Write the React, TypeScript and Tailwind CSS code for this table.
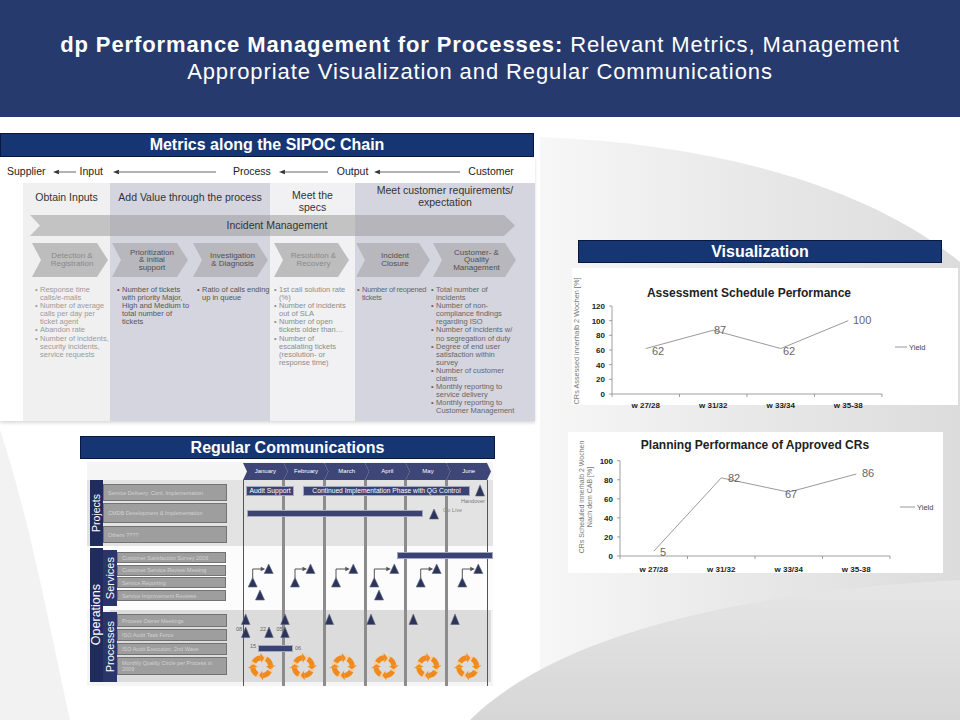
import React from "react";

function LArrow({ w, className }: { w: number; className?: string }) {
  return (
    <svg width={w} height={6} viewBox={`0 0 ${w} 6`} className={className}>
      <polygon points="0,3 6,0.8 6,5.2" fill="#333" />
      <line x1={5} y1={3} x2={w} y2={3} stroke="#666" strokeWidth={1} />
    </svg>
  );
}

function TitleBar({ children, className }: { children: React.ReactNode; className?: string }) {
  return (
    <div
      className={
        "flex items-center justify-center bg-[#163573] border border-[#08183f] text-white font-bold text-[16px] leading-none " +
        (className ?? "")
      }
    >
      {children}
    </div>
  );
}

function Lines({ lines }: { lines: string[] }) {
  return (
    <>
      {lines.map((l, i) => (
        <React.Fragment key={i}>
          {l}
          {i < lines.length - 1 && <br />}
        </React.Fragment>
      ))}
    </>
  );
}

function Bullets({ items, className }: { items: string[][]; className?: string }) {
  return (
    <div className={"text-[7.5px] leading-[8.1px] whitespace-nowrap pt-[8px] " + (className ?? "")}>
      {items.map((lines, i) => (
        <div key={i} className="flex">
          <span className="w-[5px] shrink-0">•</span>
          <span>
            <Lines lines={lines} />
          </span>
        </div>
      ))}
    </div>
  );
}

const chevClip =
  "[clip-path:polygon(0_0,calc(100%_-_11px)_0,100%_50%,calc(100%_-_11px)_100%,0_100%,9px_50%)]";

function Sipoc() {
  return (
    <div className="w-[535px] h-[264px] bg-white shadow-[0_2px_3px_rgba(0,0,0,0.15)]">
      <div className="h-[26px] flex items-center pt-[4px] pl-[7px] text-[10.5px] text-[#222]">
        <span>Supplier</span>
        <LArrow w={23} className="ml-[7px] mr-[4px]" />
        <span>Input</span>
        <LArrow w={103} className="ml-[10px] mr-[17px]" />
        <span>Process</span>
        <LArrow w={49} className="ml-[8px] mr-[9px]" />
        <span>Output</span>
        <LArrow w={86} className="ml-[6px] mr-[8px]" />
        <span>Customer</span>
      </div>
      <div className="ml-[23px] w-[512px] h-[238px] grid grid-cols-[87px_81px_79px_85px_75px_105px] grid-rows-[31px_26px_38px_143px] text-[#333]">
        <div className="col-start-1 row-start-1 row-span-4 bg-[#f0f0f1]" />
        <div className="col-start-2 col-span-2 row-start-1 row-span-4 bg-[#d5d5e0]" />
        <div className="col-start-4 row-start-1 row-span-4 bg-[#f1f1f3]" />
        <div className="col-start-5 col-span-2 row-start-1 row-span-4 bg-[#d5d5e0]" />

        <div className="col-start-1 row-start-1 text-center pt-[8px] text-[10.5px] leading-[12px]">Obtain Inputs</div>
        <div className="col-start-2 col-span-2 row-start-1 text-center pt-[8px] text-[10.5px] leading-[12px]">
          Add Value through the process
        </div>
        <div className="col-start-4 row-start-1 text-center pt-[6px] text-[10.5px] leading-[12px]">
          Meet the
          <br />
          specs
        </div>
        <div className="col-start-5 col-span-2 row-start-1 text-center pt-[1px] text-[10.5px] leading-[12px]">
          Meet customer requirements/
          <br />
          expectation
        </div>

        <div
          className={
            "col-start-1 col-span-6 row-start-2 ml-[7px] mr-[20px] mt-[1px] h-[21px] pl-[9px] flex items-center justify-center bg-[rgba(149,149,149,0.5)] text-[10.5px] text-[#333] [clip-path:polygon(0_0,calc(100%_-_11px)_0,100%_50%,calc(100%_-_11px)_100%,0_100%,10px_50%)]"
          }
        >
          Incident Management
        </div>

        <div className={"col-start-1 row-start-3 ml-[9px] mt-[3px] w-[76px] h-[34px] pl-[4px] flex items-center justify-center text-center text-[8px] leading-[8px] bg-[#bdbdbd] text-[#8a8a8a] " + chevClip}>
          <span>Detection &amp;<br />Registration</span>
        </div>
        <div className={"col-start-2 row-start-3 ml-[2px] mt-[3px] w-[76px] h-[34px] pl-[4px] flex items-center justify-center text-center text-[8px] leading-[7.5px] bg-[#b7b7bd] text-[#505050] " + chevClip}>
          <span>Prioritization<br />&amp; initial<br />support</span>
        </div>
        <div className={"col-start-3 row-start-3 ml-[2px] mt-[3px] w-[75px] h-[34px] pl-[4px] flex items-center justify-center text-center text-[8px] leading-[8px] bg-[#b7b7bd] text-[#505050] " + chevClip}>
          <span>Investigation<br />&amp; Diagnosis</span>
        </div>
        <div className={"col-start-4 row-start-3 ml-[4px] mt-[3px] w-[75px] h-[34px] pl-[4px] flex items-center justify-center text-center text-[8px] leading-[8px] bg-[#bdbdbd] text-[#8a8a8a] " + chevClip}>
          <span>Resolution &amp;<br />Recovery</span>
        </div>
        <div className={"col-start-5 row-start-3 ml-[1px] mt-[3px] w-[74px] h-[34px] pl-[4px] flex items-center justify-center text-center text-[8px] leading-[8px] bg-[#b7b7bd] text-[#505050] " + chevClip}>
          <span>Incident<br />Closure</span>
        </div>
        <div className={"col-start-6 row-start-3 ml-[3px] mt-[3px] w-[83px] h-[34px] pl-[4px] flex items-center justify-center text-center text-[8px] leading-[7.5px] bg-[#b7b7bd] text-[#505050] " + chevClip}>
          <span>Customer- &amp;<br />Quality<br />Management</span>
        </div>

        <Bullets
          className="col-start-1 row-start-4 pl-[12px] text-[#9b9b9b]"
          items={[
            ["Response time", "calls/e-mails"],
            ["Number of average", "calls per day per", "ticket agent"],
            ["Abandon rate"],
            ["Number of incidents,", "security incidents,", "service requests"],
          ]}
        />
        <Bullets
          className="col-start-2 row-start-4 pl-[7px] text-[#555]"
          items={[["Number of tickets", "with priority Major,", "High and Medium to", "total number of", "tickets"]]}
        />
        <Bullets className="col-start-3 row-start-4 pl-[6px] text-[#555]" items={[["Ratio of calls ending", "up in queue"]]} />
        <Bullets
          className="col-start-4 row-start-4 pl-[4px] text-[#8c8c8c]"
          items={[
            ["1st call solution rate", "(%)"],
            ["Number of incidents", "out of SLA"],
            ["Number of open", "tickets older than…"],
            ["Number of", "escalating tickets", "(resolution- or", "response time)"],
          ]}
        />
        <Bullets className="col-start-5 row-start-4 pl-[2px] text-[#666] tracking-[-0.25px]" items={[["Number of reopened", "tickets"]]} />
        <Bullets
          className="col-start-6 row-start-4 pl-[1px] text-[#666]"
          items={[
            ["Total number of", "incidents"],
            ["Number of non-", "compliance findings", "regarding ISO"],
            ["Number of incidents w/", "no segregation of duty"],
            ["Degree of end user", "satisfaction within", "survey"],
            ["Number of customer", "claims"],
            ["Monthly reporting to", "service delivery"],
            ["Monthly reporting to", "Customer Management"],
          ]}
        />
      </div>
    </div>
  );
}

function Box({ className, children }: { className?: string; children: React.ReactNode }) {
  return (
    <div
      className={
        "bg-[#9e9e9e] border border-[#737373] text-[#d2d2d2] text-[5.5px] leading-[6px] pl-[4px] flex items-center whitespace-nowrap overflow-hidden " +
        (className ?? "")
      }
    >
      <span>{children}</span>
    </div>
  );
}

function Tri({ cx, top, w = 9, h = 10 }: { cx: number; top: number; w?: number; h?: number }) {
  return (
    <polygon
      points={`${cx - w / 2},${top + h} ${cx + w / 2},${top + h} ${cx},${top}`}
      fill="#2c3559"
      stroke="#5d6585"
      strokeWidth={0.6}
    />
  );
}

function Cycle({ cx, cy }: { cx: number; cy: number }) {
  const r = 9;
  const P = (deg: number, rad: number) => {
    const a = (deg * Math.PI) / 180;
    return `${(cx + rad * Math.cos(a)).toFixed(2)},${(cy + rad * Math.sin(a)).toFixed(2)}`;
  };
  return (
    <g>
      <circle cx={cx} cy={cy} r={r} stroke="#f3cda3" strokeWidth={5} fill="none" />
      {[0, 1, 2, 3].map((k) => {
        const b = k * 90 - 60;
        const a0 = b;
        const a1 = b + 54;
        const at = b + 76;
        return (
          <g key={k}>
            <path d={`M${P(a0, r)} A${r} ${r} 0 0 1 ${P(a1, r)}`} stroke="#f08a1d" strokeWidth={5} fill="none" />
            <polygon points={`${P(a1, r + 5)} ${P(at, r)} ${P(a1, r - 5)}`} fill="#f08a1d" />
          </g>
        );
      })}
    </g>
  );
}

const monthCols = ["col-start-2", "col-start-3", "col-start-4", "col-start-5", "col-start-6", "col-start-7"];
const months = ["January", "February", "March", "April", "May", "June"];

function Gantt({ className }: { className?: string }) {
  const lows = [165.7, 208, 249, 287.3, 333.7, 375.3];
  const highs = [181.7, 223.5, 266.3, 307.3, 349.7, 391.3];
  const cyc = [174.7, 216.3, 256.3, 298, 340.7, 380.7];
  return (
    <div
      className={
        "relative w-[406px] h-[224px] bg-[#f5f5f5] grid grid-cols-[156px_repeat(6,1fr)_6px] grid-rows-[18px_66px_64px_72px_4px] " +
        (className ?? "")
      }
    >
      <div className="row-start-2 col-start-1 col-span-8 bg-[#e3e3e3]" />
      <div className="row-start-3 col-start-1 col-span-8 bg-[#fcfcfc]" />
      <div className="row-start-4 col-start-1 col-span-8 ml-[23px] mr-[2px] bg-[#dcdcdc]" />

      {months.map((m, i) => (
        <div
          key={m}
          className={
            monthCols[i] +
            " row-start-1 mt-[1px] h-[17px] w-[calc(100%_+_4px)] bg-[#3d4676] flex items-center justify-center text-white text-[6px] [clip-path:polygon(0_0,calc(100%_-_4px)_0,100%_50%,calc(100%_-_4px)_100%,0_100%,4px_50%)]"
          }
        >
          {m}
        </div>
      ))}

      <div className="col-start-2 row-start-2 row-span-4 border-l border-[#555]" />
      <div className="col-start-3 row-start-2 row-span-4 -ml-[1.5px] border-l-[3px] border-[#8c8c8c]" />
      <div className="col-start-4 row-start-2 row-span-4 -ml-[1.5px] border-l-[3px] border-[#8c8c8c]" />
      <div className="col-start-5 row-start-2 row-span-4 -ml-[1.5px] border-l-[3px] border-[#8c8c8c]" />
      <div className="col-start-6 row-start-2 row-span-4 -ml-[1.5px] border-l-[3px] border-[#8c8c8c]" />
      <div className="col-start-7 row-start-2 row-span-4 -ml-[1.5px] border-l-[3px] border-[#8c8c8c]" />
      <div className="col-start-8 row-start-2 row-span-4 border-l border-[#555]" />

      <div className="row-start-2 col-start-1 flex pl-[3px]">
        <div className="w-[13px] bg-[#202c5e] flex items-center justify-center">
          <span className="[writing-mode:vertical-rl] rotate-180 text-white text-[10.5px] leading-none">Projects</span>
        </div>
        <div className="w-[124px] flex flex-col pt-[4px]">
          <Box className="h-[17px]">Service Delivery: Cont. Implementation</Box>
          <Box className="h-[20px] mt-[2px]">CMDB Development &amp; Implementation</Box>
          <Box className="h-[17px] mt-[3px]">Others ????</Box>
        </div>
      </div>

      <div className="row-start-3 row-span-2 col-start-1 flex pl-[3px] pt-[2px]">
        <div className="w-[13px] bg-[#202c5e] flex items-center justify-center">
          <span className="[writing-mode:vertical-rl] rotate-180 text-white text-[12.5px] leading-none">Operations</span>
        </div>
        <div className="flex flex-col">
          <div className="h-[62px] flex">
            <div className="mt-[2px] w-[14px] h-[56px] bg-[#2a3668] flex items-center justify-center">
              <span className="[writing-mode:vertical-rl] rotate-180 text-white text-[11px] leading-none">Services</span>
            </div>
            <div className="w-[109px] flex flex-col pt-[4px] gap-[1.7px]">
              <Box className="h-[11px]">Customer Satisfaction Survey 2009</Box>
              <Box className="h-[11px]">Customer Service Review Meeting</Box>
              <Box className="h-[11px]">Service Reporting</Box>
              <Box className="h-[11px]">Service Improvement Reviews</Box>
            </div>
          </div>
          <div className="h-[72px] flex">
            <div className="mt-[2px] w-[14px] h-[70px] bg-[#2a3668] flex items-center justify-center">
              <span className="[writing-mode:vertical-rl] rotate-180 text-white text-[11px] leading-none">Processes</span>
            </div>
            <div className="w-[110px] flex flex-col pt-[4px] gap-[2px]">
              <Box className="h-[13px]">Process Owner Meetings</Box>
              <Box className="h-[12px]">ISO Audit Task Force</Box>
              <Box className="h-[12px]">ISO Audit Execution, 2nd Wave</Box>
              <Box className="h-[18px]">
                Monthly Quality Circle per Process in
                <br />
                2009
              </Box>
            </div>
          </div>
        </div>
      </div>

      <svg className="absolute left-0 top-0 pointer-events-none" width={406} height={224} viewBox="0 0 406 224">
        <Tri cx={393} top={23} w={9} h={11} />
        <Tri cx={347} top={47} w={9} h={10} />
        {lows.map((L, i) => (
          <g key={i}>
            <path d={`M${L},116 V107 H${highs[i] - 7}`} stroke="#555" strokeWidth={1} fill="none" />
            <polygon points={`${highs[i] - 8},104.8 ${highs[i] - 3.5},107 ${highs[i] - 8},109.2`} fill="#555" />
            <Tri cx={L} top={115.5} w={9} h={9.5} />
            <Tri cx={highs[i]} top={102} w={9} h={9.5} />
          </g>
        ))}
        <Tri cx={173} top={128} w={9} h={10} />
        <Tri cx={292} top={128} w={9} h={10} />
        {[158.7, 198, 242.3, 284, 326.3, 368].map((x, i) => (
          <Tri key={i} cx={x} top={152} w={8.5} h={10.5} />
        ))}
        {[158.7, 182, 198].map((x, i) => (
          <Tri key={i} cx={x} top={165} w={8.5} h={10.5} />
        ))}
        {cyc.map((x, i) => (
          <Cycle key={i} cx={x} cy={204.7} />
        ))}
      </svg>

      <div className="absolute left-[159px] top-[24px] w-[48px] h-[10px] bg-[#3a4372] border border-[#a3a8c2] text-white text-[6.8px] leading-none flex items-center justify-center whitespace-nowrap">
        Audit Support
      </div>
      <div className="absolute left-[216px] top-[24px] w-[167px] h-[10px] bg-[#3a4372] border border-[#a3a8c2] text-white text-[6.7px] leading-none flex items-center justify-center whitespace-nowrap">
        Continued Implementation Phase with QG Control
      </div>
      <div className="absolute left-[160px] top-[48px] w-[176px] h-[7px] bg-[#3a4372] border border-[#a3a8c2]" />
      <div className="absolute left-[310px] top-[90px] w-[96px] h-[7px] bg-[#3a4372] border border-[#a3a8c2]" />
      <div className="absolute left-[171px] top-[183px] w-[35px] h-[7px] bg-[#3a4372] border border-[#a3a8c2]" />
      <div className="absolute left-[374px] top-[37px] text-[5.5px] leading-none text-[#777]">Handover</div>
      <div className="absolute left-[356px] top-[46px] text-[5.5px] leading-none text-[#888]">Go Live</div>
      <div className="absolute left-[149px] top-[165px] text-[5.5px] leading-none text-[#666]">08</div>
      <div className="absolute left-[173px] top-[165px] text-[5.5px] leading-none text-[#666]">22</div>
      <div className="absolute left-[189.5px] top-[165px] text-[5.5px] leading-none text-[#666]">05</div>
      <div className="absolute left-[163px] top-[182px] text-[5.5px] leading-none text-[#666]">15</div>
      <div className="absolute left-[208px] top-[184px] text-[5.5px] leading-none text-[#666]">06</div>
    </div>
  );
}

const FF = "'Liberation Sans', Arial, sans-serif";

function Chart1() {
  const y = (v: number) => 394 - v * 0.7333;
  const xs = [645.75, 713.25, 780.75, 848.25];
  const vals = [62, 87, 62, 100];
  const cats = ["w 27/28", "w 31/32", "w 33/34", "w 35-38"];
  return (
    <svg width={386} height={142} viewBox="572 268 386 142" className="block overflow-visible" fontFamily={FF}>
      <text transform="translate(579 341) rotate(-90)" textAnchor="middle" fontSize={7.3} fill="#777">
        CRs Assessed innerhalb 2 Wochen [%]
      </text>
      <text x={749} y={297} textAnchor="middle" fontSize={12} fontWeight="bold" fill="#222">
        Assessment Schedule Performance
      </text>
      {[0, 20, 40, 60, 80, 100, 120].map((v) => (
        <g key={v}>
          <text x={605} y={y(v) + 3} textAnchor="end" fontSize={8} fontWeight="bold" fill="#222">
            {v}
          </text>
          <line x1={609} x2={612} y1={y(v)} y2={y(v)} stroke="#888" strokeWidth={0.8} />
        </g>
      ))}
      <line x1={612} y1={y(120)} x2={612} y2={394} stroke="#888" strokeWidth={0.8} />
      <line x1={612} y1={394} x2={882} y2={394} stroke="#888" strokeWidth={0.8} />
      {[612, 679.5, 747, 814.5, 882].map((x) => (
        <line key={x} x1={x} x2={x} y1={394} y2={397} stroke="#888" strokeWidth={0.8} />
      ))}
      {cats.map((c, i) => (
        <text key={c} x={xs[i]} y={408} textAnchor="middle" fontSize={8} fontWeight="bold" fill="#222">
          {c}
        </text>
      ))}
      <polyline points={xs.map((x, i) => `${x},${y(vals[i])}`).join(" ")} fill="none" stroke="#9a9a9a" strokeWidth={1} />
      <text x={652} y={355} fontSize={11} fill="#666">62</text>
      <text x={714} y={334} fontSize={11} fill="#666">87</text>
      <text x={783} y={355} fontSize={11} fill="#666">62</text>
      <text x={853} y={324} fontSize={11} fill="#666">100</text>
      <line x1={895} x2={907} y1={347} y2={347} stroke="#999" strokeWidth={1} />
      <text x={909} y={350} fontSize={7.5} fill="#444">Yield</text>
    </svg>
  );
}

function Chart2() {
  const y = (v: number) => 556 - v * 0.953;
  const xs = [653.75, 721.25, 788.75, 856.25];
  const vals = [5, 82, 67, 86];
  const cats = ["w 27/28", "w 31/32", "w 33/34", "w 35-38"];
  return (
    <svg width={375} height={142} viewBox="568 432 375 142" className="block overflow-visible" fontFamily={FF}>
      <text transform="translate(584 497) rotate(-90)" textAnchor="middle" fontSize={7} fill="#777">
        CRs  Scheduled  innerhalb 2 Wochen
      </text>
      <text transform="translate(591.5 497) rotate(-90)" textAnchor="middle" fontSize={7} fill="#777">
        Nach dem CAB [%]
      </text>
      <text x={755} y={449} textAnchor="middle" fontSize={12} fontWeight="bold" fill="#222">
        Planning Performance of Approved CRs
      </text>
      {[0, 20, 40, 60, 80, 100].map((v) => (
        <g key={v}>
          <text x={613} y={y(v) + 3} textAnchor="end" fontSize={8} fontWeight="bold" fill="#222">
            {v}
          </text>
          <line x1={617} x2={620} y1={y(v)} y2={y(v)} stroke="#888" strokeWidth={0.8} />
        </g>
      ))}
      <line x1={620} y1={y(100)} x2={620} y2={556} stroke="#888" strokeWidth={0.8} />
      <line x1={620} y1={556} x2={890} y2={556} stroke="#888" strokeWidth={0.8} />
      {[620, 687.5, 755, 822.5, 890].map((x) => (
        <line key={x} x1={x} x2={x} y1={556} y2={559} stroke="#888" strokeWidth={0.8} />
      ))}
      {cats.map((c, i) => (
        <text key={c} x={xs[i]} y={572} textAnchor="middle" fontSize={8} fontWeight="bold" fill="#222">
          {c}
        </text>
      ))}
      <polyline points={xs.map((x, i) => `${x},${y(vals[i])}`).join(" ")} fill="none" stroke="#9a9a9a" strokeWidth={1} />
      <text x={660} y={555.5} fontSize={11} fill="#666">5</text>
      <text x={728} y={482} fontSize={11} fill="#666">82</text>
      <text x={785} y={497.5} fontSize={11} fill="#666">67</text>
      <text x={862} y={477} fontSize={11} fill="#666">86</text>
      <line x1={900} x2={915} y1={507} y2={507} stroke="#999" strokeWidth={1} />
      <text x={917} y={510} fontSize={7.5} fill="#444">Yield</text>
    </svg>
  );
}

function Backdrop() {
  return (
    <svg className="absolute left-0 top-0" width={960} height={720} viewBox="0 0 960 720">
      <defs>
        <linearGradient id="bgA" x1="0" y1="0" x2="1" y2="0">
          <stop offset="0" stopColor="#f7f7f7" />
          <stop offset="0.5" stopColor="#e8e8e8" />
          <stop offset="1" stopColor="#dcdcdc" />
        </linearGradient>
        <linearGradient id="bgB" x1="0" y1="0" x2="0" y2="1">
          <stop offset="0" stopColor="#e6e6e6" />
          <stop offset="1" stopColor="#d6d6d6" />
        </linearGradient>
      </defs>
      <path d="M540 137 C 700 143, 860 180, 960 262 L960 720 L540 720 Z" fill="url(#bgA)" />
      <path d="M470 720 C 560 630, 760 590, 960 580 L960 720 Z" fill="url(#bgB)" />
      <path d="M0 430 C 30 520, 50 630, 70 720 L0 720 Z" fill="#f2f2f2" />
    </svg>
  );
}

export default function App() {
  return (
    <div className="relative w-[960px] h-[720px] overflow-hidden bg-white font-['Liberation_Sans',Arial,sans-serif]">
      <Backdrop />
      <div className="relative">
        <header className="h-[117px] bg-[#263a6e] text-white text-center text-[22px] leading-[27px] tracking-[0.9px] pt-[31px]">
          <div>
            <span className="font-bold">dp Performance Management for Processes:</span> Relevant Metrics, Management
          </div>
          <div>Appropriate Visualization and Regular Communications</div>
        </header>
        <div className="flex">
          <div className="w-[540px] shrink-0 flex flex-col">
            <TitleBar className="mt-[16px] w-[534px] h-[24px]">Metrics along the SIPOC Chain</TitleBar>
            <Sipoc />
            <div className="mt-[15px] ml-[80px] w-[415px]">
              <TitleBar className="h-[23px]">Regular Communications</TitleBar>
              <Gantt className="mt-[3px] ml-[7px]" />
            </div>
          </div>
          <div className="flex-1 flex flex-col">
            <TitleBar className="mt-[123px] ml-[38px] w-[364px] h-[23px]">Visualization</TitleBar>
            <div className="mt-[5px] ml-[32px] w-[386px] h-[137px] bg-white">
              <Chart1 />
            </div>
            <div className="mt-[27px] ml-[28px] w-[375px] h-[141px] bg-white">
              <Chart2 />
            </div>
          </div>
        </div>
      </div>
    </div>
  );
}
